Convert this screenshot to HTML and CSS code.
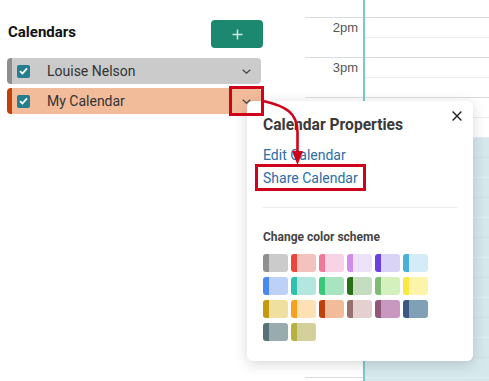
FILE: index.html
```html
<!DOCTYPE html>
<html>
<head>
<meta charset="utf-8">
<link rel="stylesheet" href="styles.css">
</head>
<body>
<div class="app">
  <aside class="sidebar">
    <div class="sb-head">
      <h2 class="sb-title">Calendars</h2>
      <button class="add-btn" aria-label="Add calendar">
        <svg width="11" height="11" viewBox="0 0 11 11"><path d="M5.5 0.5V10.5M0.5 5.5H10.5" stroke="#cfe9df" stroke-width="1.5"/></svg>
      </button>
    </div>
    <ul class="cal-list">
      <li class="cal-row gray">
        <span class="check"><svg width="9" height="8" viewBox="0 0 9 8"><path d="M1 4.2L3.4 6.5L8 1.3" fill="none" stroke="#fff" stroke-width="1.8"/></svg></span>
        <span class="cal-name">Louise Nelson</span>
        <svg class="chev" width="9" height="5" viewBox="0 0 9 5"><path d="M0.7 0.7L4.5 4.2L8.3 0.7" fill="none" stroke="#444" stroke-width="1.2"/></svg>
      </li>
      <li class="cal-row orange">
        <span class="check"><svg width="9" height="8" viewBox="0 0 9 8"><path d="M1 4.2L3.4 6.5L8 1.3" fill="none" stroke="#fff" stroke-width="1.8"/></svg></span>
        <span class="cal-name">My Calendar</span>
        <svg class="chev" width="9" height="5" viewBox="0 0 9 5"><path d="M0.7 0.7L4.5 4.2L8.3 0.7" fill="none" stroke="#444" stroke-width="1.2"/></svg>
        <span class="hl-box chev-box"></span>
      </li>
    </ul>
  </aside>

  <section class="grid">
    <div class="slot-row stub"><div class="time"></div><div class="day"><div class="half first"></div></div></div>
    <div class="hour"><div class="time">2pm</div><div class="day"><div class="half"></div><div class="half sub"></div></div></div>
    <div class="hour"><div class="time">3pm</div><div class="day"><div class="half"></div><div class="half sub"></div></div></div>
    <div class="hour"><div class="time">4pm</div><div class="day"><div class="half"></div><div class="half sub"></div></div></div>
    <div class="hour"><div class="time">5pm</div><div class="day busy"><div class="half"></div><div class="half sub"></div></div></div>
    <div class="hour"><div class="time">6pm</div><div class="day busy"><div class="half"></div><div class="half sub"></div></div></div>
    <div class="hour"><div class="time">7pm</div><div class="day busy"><div class="half"></div><div class="half sub"></div></div></div>
    <div class="hour"><div class="time">8pm</div><div class="day busy"><div class="half"></div><div class="half sub"></div></div></div>
    <div class="hour"><div class="time">9pm</div><div class="day busy"><div class="half"></div><div class="half sub"></div></div></div>
    <div class="hour"><div class="time">10pm</div><div class="day busy"><div class="half"></div><div class="half sub"></div></div></div>
    <div class="hour"><div class="time"></div><div class="day busy"><div class="half"></div><div class="half sub"></div></div></div>
  </section>
</div>

<div class="popup">
  <button class="close" aria-label="Close">
    <svg width="10" height="10" viewBox="0 0 10 10"><path d="M0.6 0.6L9.4 9.4M9.4 0.6L0.6 9.4" stroke="#222" stroke-width="1.4"/></svg>
  </button>
  <h3 class="pop-title">Calendar Properties</h3>
  <a class="pop-link edit">Edit Calendar</a>
  <a class="pop-link share">Share Calendar<span class="hl-box share-box"></span></a>
  <hr class="divider">
  <h4 class="scheme-title">Change color scheme</h4>
  <div class="swatches">
    <span class="sw" style="--d:#8f8f8f;--l:#cbcbcb"></span>
    <span class="sw" style="--d:#e8463f;--l:#f3c2bd"></span>
    <span class="sw" style="--d:#f07899;--l:#f8d3e6"></span>
    <span class="sw" style="--d:#d08ee9;--l:#eee1fa"></span>
    <span class="sw" style="--d:#6b3fe0;--l:#dad3f8"></span>
    <span class="sw" style="--d:#48b0d9;--l:#d4ecf8"></span>
    <span class="sw" style="--d:#4a8af0;--l:#bdd0f8"></span>
    <span class="sw" style="--d:#2fc0b0;--l:#b4e6e0"></span>
    <span class="sw" style="--d:#38c878;--l:#a8e4c0"></span>
    <span class="sw" style="--d:#2a7018;--l:#c4dcc0"></span>
    <span class="sw" style="--d:#80ba78;--l:#d4f0bc"></span>
    <span class="sw" style="--d:#f8e840;--l:#fcf4a8"></span>
    <span class="sw" style="--d:#c49a10;--l:#f0e0a0"></span>
    <span class="sw" style="--d:#f8a020;--l:#fde0b4"></span>
    <span class="sw" style="--d:#c0400c;--l:#f2bc9b"></span>
    <span class="sw" style="--d:#987070;--l:#e4d0d0"></span>
    <span class="sw" style="--d:#905878;--l:#c898c0"></span>
    <span class="sw" style="--d:#3a5880;--l:#80a0b8"></span>
    <span class="sw" style="--d:#587078;--l:#98acb0"></span>
    <span class="sw" style="--d:#b8b040;--l:#d4d09c"></span>
  </div>
</div>

<svg class="arrow" width="489" height="381" viewBox="0 0 489 381">
  <path d="M263 101 C286 106 297.5 113 297.5 132 L297.5 153" fill="none" stroke="#d0021b" stroke-width="2.6"/>
  <path d="M292 151 L303 151 L297.5 165 Z" fill="#d0021b"/>
</svg>
</body>
</html>
```

FILE: styles.css
```css
* { box-sizing: border-box; }
html, body { margin: 0; padding: 0; }
body {
  width: 489px;
  height: 381px;
  overflow: hidden;
  background: #fff;
  font-family: Roboto, Inter, "Noto Sans", sans-serif;
  color: #333;
  position: relative;
}
.app {
  display: flex;
  height: 381px;
  overflow: hidden;
}
.sidebar {
  width: 305px;
  flex: none;
  padding: 20px 0 0 7px;
}
.sb-head {
  display: flex;
  align-items: center;
  justify-content: space-between;
  width: 256px;
  height: 28px;
}
.sb-title {
  margin: -4px 0 0 1px;
  font-size: 15px;
  font-weight: 700;
  color: #111;
}
.add-btn {
  width: 52px;
  height: 28px;
  border: 0;
  border-radius: 4px;
  background: #1c8870;
  display: flex;
  align-items: center;
  justify-content: center;
  padding: 0;
}
.cal-list {
  list-style: none;
  margin: 10px 0 0;
  padding: 0;
  display: flex;
  flex-direction: column;
  gap: 4px;
  width: 254px;
}
.cal-row {
  position: relative;
  height: 26px;
  display: flex;
  align-items: center;
  border-left: 5px solid;
  border-radius: 4px;
  padding-left: 5px;
  font-size: 14px;
  color: #333;
}
.cal-row.gray { background: #cbcbcb; border-left-color: #8f8f8f; }
.cal-row.orange { background: #f2bc9b; border-left-color: #c0400c; }
.check {
  width: 13px;
  height: 13px;
  border-radius: 2px;
  background: #237e8e;
  display: flex;
  align-items: center;
  justify-content: center;
}
.cal-name { margin-left: 17px; }
.chev { margin-left: auto; margin-right: 10px; }
.hl-box {
  position: absolute;
  border: 3px solid #d0021b;
  z-index: 5;
}
.chev-box {
  left: 217px;
  top: -2px;
  width: 35px;
  height: 30px;
}
.grid {
  flex: 1;
  display: flex;
  flex-direction: column;
}
.slot-row, .hour {
  display: flex;
  flex: none;
}
.stub { height: 17px; }
.hour { height: 40px; }
.time {
  width: 58px;
  flex: none;
  text-align: right;
  padding: 2px 5px 0 0;
  font-family: "Liberation Sans", Arial, sans-serif;
  font-size: 13px;
  line-height: 15px;
  color: #555;
}
.hour .time { border-top: 1px solid #d8dcde; }
.day {
  flex: 1;
  border-left: 2px solid #7cc7cc;
  display: flex;
  flex-direction: column;
}
.half { height: 20px; border-top: 1px solid #d8dcde; }
.half.first { height: 17px; border-top: 0; }
.half.sub { border-top-color: #eceef0; }
.day.busy .half { background: #d5e8ec; border-top-color: #e1eef1; }
.day.busy .half.sub { border-top-color: #cfe1e5; }
.popup {
  position: absolute;
  left: 247px;
  top: 101px;
  width: 226px;
  height: 260px;
  background: #fff;
  border-radius: 6px;
  box-shadow: 0 3px 14px rgba(0, 0, 0, 0.16);
  padding: 14px 16px 0 16px;
  z-index: 3;
}
.close {
  position: absolute;
  right: 10px;
  top: 9px;
  border: 0;
  background: none;
  padding: 0;
  width: 12px;
  height: 12px;
  display: flex;
  align-items: center;
  justify-content: center;
}
.pop-title {
  margin: 0;
  font-size: 15.6px;
  font-weight: 700;
  line-height: 20px;
  color: #3a3a3a;
}
.pop-link {
  display: block;
  position: relative;
  width: max-content;
  font-size: 14px;
  line-height: 20px;
  color: #2c6ea6;
}
.edit { margin-top: 10px; }
.share { margin-top: 3px; }
.share-box {
  left: -8px;
  top: -4px;
  right: -8px;
  bottom: -3px;
}
.divider {
  border: 0;
  border-top: 1px solid #ebebeb;
  margin: 19px 0 0;
}
.scheme-title {
  margin: 22px 0 0;
  font-size: 12px;
  font-weight: 700;
  line-height: 14px;
  color: #444;
}
.swatches {
  display: grid;
  grid-template-columns: repeat(6, 25px);
  column-gap: 3px;
  row-gap: 5px;
  margin-top: 10px;
}
.sw {
  height: 18px;
  border-radius: 3px;
  background: linear-gradient(to right, var(--d) 0 6px, var(--l) 6px);
}
.arrow {
  position: absolute;
  left: 0;
  top: 0;
  z-index: 6;
  pointer-events: none;
}
```
